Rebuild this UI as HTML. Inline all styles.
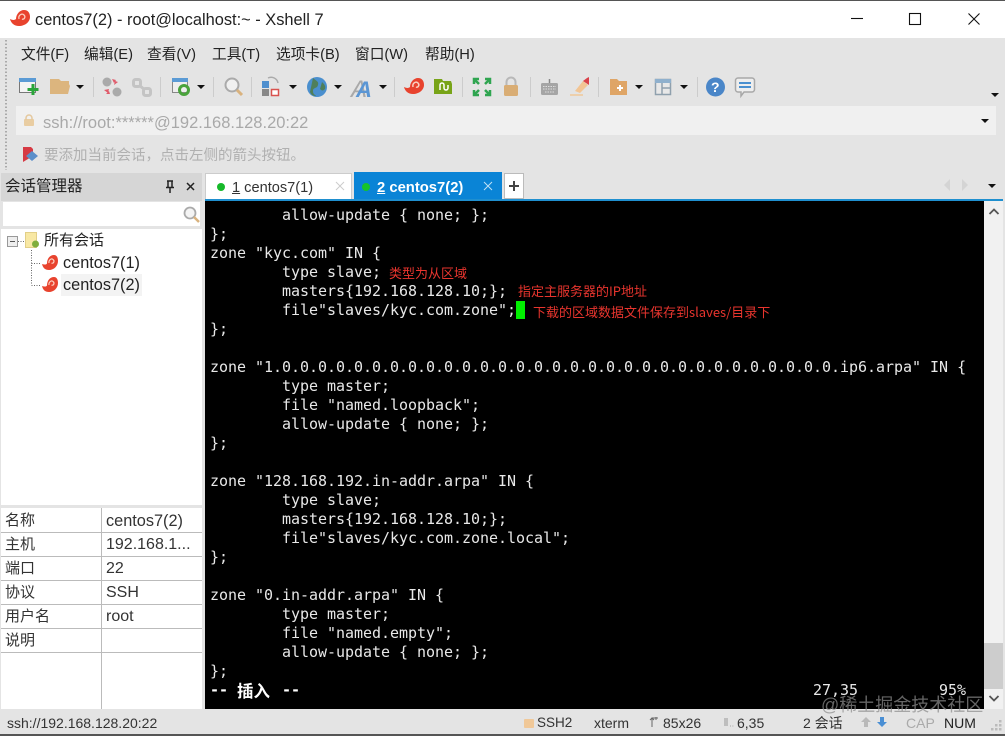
<!DOCTYPE html>
<html><head><meta charset="utf-8"><style>
html,body{margin:0;padding:0}
body{width:1005px;height:736px;overflow:hidden;position:relative;background:#e4e4e4;font-family:"Liberation Sans","Noto Sans CJK SC",sans-serif;color:#222}
.a{position:absolute;white-space:pre}
.t{position:absolute;left:210px;font:15px/19px "DejaVu Sans Mono",monospace;letter-spacing:-.03px;color:#e8e8e8;white-space:pre}
.r{position:absolute;color:#e8352e;font:13px/16px "Noto Sans CJK SC",sans-serif;white-space:pre}
.m{position:absolute;top:46px;font-size:14.700px;line-height:18px;color:#222;white-space:pre}
.k{position:absolute;left:5px;font-size:15px;line-height:20px;color:#333}
.v{position:absolute;left:106px;font-size:16px;line-height:20px;color:#333}
.h{position:absolute;left:1px;width:201px;height:1px;background:#bbb}
.d{position:absolute;width:0;height:0;border-left:4px solid transparent;border-right:4px solid transparent;border-top:4px solid #111}
.s{position:absolute;top:77px;width:1px;height:20px;background:#ccc}
.st{position:absolute;top:715px;font-size:14px;line-height:16px;color:#333;white-space:pre}
svg{position:absolute;overflow:visible}
</style></head><body>
<div class="a" style="left:0;top:0;width:1005px;height:38px;background:#fff;border-top:1px solid #555;box-sizing:border-box"></div>
<svg style="left:10px;top:10px" width="20" height="17" viewBox="0 0 20 17"><path d="M0 9C3 10.500 5 10 6 9C6 4 10 0 14 0C18 0 20 3 20 7C20 12 15 16 9 16C4 16 1 13 0 9z" fill="#e8432e"/><path d="M9 9C8 5 12 3 14 5C16 7 14 10 12 9" fill="none" stroke="#fbd0c0" stroke-width="1.300"/></svg>
<div class="a" style="left:35px;top:11px;font-size:16.400px;line-height:19px;color:#222">centos7(2) - root@localhost:~ - Xshell 7</div>
<svg style="left:0;top:0" width="1005" height="38" fill="none" stroke="#111" stroke-width="1.100"><path d="M851 18.500h12"/><rect x="909.500" y="13.500" width="11" height="11"/><path d="M968.500 13.500l11 11m0-11l-11 11"/></svg>

<svg style="left:4px;top:38px" width="4" height="132"><line x1="2" y1="2" x2="2" y2="132" stroke="#aaa" stroke-width="2" stroke-dasharray="1.500 2"/></svg>
<div class="m" style="left:21px">文件(F)</div>
<div class="m" style="left:84px">编辑(E)</div>
<div class="m" style="left:147px">查看(V)</div>
<div class="m" style="left:212px">工具(T)</div>
<div class="m" style="left:276px">选项卡(B)</div>
<div class="m" style="left:355px">窗口(W)</div>
<div class="m" style="left:425px">帮助(H)</div>

<!-- toolbar -->
<svg style="left:0;top:65px" width="1005" height="40" viewBox="0 65 1005 40">
<g><rect x="19.500" y="78.500" width="16" height="14" fill="#f4f4f4" stroke="#777"/><rect x="19" y="78" width="17" height="4" fill="#5b9bd5"/><path d="M33 84v11M27.500 89.500h11" stroke="#2aa53a" stroke-width="3"/></g>
<path d="M50 79h9l2 2h8l0 3 1 2-2 8H50z" fill="#dcb57e"/>
<g fill="#aaa"><circle cx="107" cy="82" r="4.500"/><circle cx="117" cy="92" r="4.500"/><path d="M104 90l5-1-1 4z M112 79l4 1-2 3z M118 82l-4 3 1-4z M106 94l3-3 1 3z" fill="#e05a6a"/></g>
<g fill="none" stroke="#c4c4c4" stroke-width="3"><rect x="133.500" y="79.500" width="7" height="7" rx="2"/><rect x="143.500" y="88.500" width="7" height="7" rx="2"/><path d="M139 85l6 5"/></g>
<g><rect x="172.500" y="78.500" width="15" height="14" fill="#eee" stroke="#888"/><rect x="172" y="78" width="16" height="4" fill="#5b9bd5"/><circle cx="184" cy="90" r="4.500" fill="none" stroke="#49a33b" stroke-width="3"/></g>
<circle cx="232" cy="85" r="6.500" fill="#f0f0f0" stroke="#aaa" stroke-width="2"/><path d="M237 90l5 5" stroke="#d9b27e" stroke-width="3"/>
<g><rect x="262" y="81" width="7" height="7" fill="#4f8fce"/><rect x="262" y="89" width="7" height="7" fill="#888"/><rect x="271.500" y="89.500" width="7" height="6" fill="#fff" stroke="#d9534f" stroke-width="1.500"/><path d="M268 78a7 7 0 0 1 10 5" fill="none" stroke="#aaa" stroke-width="1.500"/></g>
<circle cx="317" cy="87" r="10" fill="#4a8fce"/><path d="M313 78c3 3 6 3 5 7s-5 2-5 6 3 4 3 5c-4 0-5-2-6-4z M322 82c2 2 4 4 3 7-2 2-3 2-5 0z" fill="#4f7f5a"/>
<text x="351" y="97" font-family="Liberation Sans" font-style="italic" font-size="24" fill="#a9a9a9">A</text><text x="356" y="97" font-family="Liberation Sans" font-style="italic" font-weight="bold" font-size="22" fill="#5b96d4">A</text>
<g transform="translate(404 78)"><path d="M0 9C3 10.500 5 10 6 9C6 4 10 0 14 0C18 0 20 3 20 7C20 12 15 16 9 16C4 16 1 13 0 9z" fill="#e8432e"/><path d="M9 9C8 5 12 3 14 5C16 7 14 10 12 9" fill="none" stroke="#fbd0c0" stroke-width="1.500"/></g>
<path d="M434 79h8l1 2h8l1 3v10h-18z" fill="#78a418"/><path d="M440 90v-5a2 2 0 0 1 4 0v3a2 2 0 0 0 4 0v-3" fill="none" stroke="#fff" stroke-width="1.500"/>
<g stroke="#2fa550" stroke-width="2.500" fill="none"><path d="M474 84v-5h5M490 84v-5h-5M474 90v5h5M490 90v5h-5M475 80l4 4M489 80l-4 4M475 94l4-4M489 94l-4-4"/></g>
<rect x="504" y="85" width="14" height="11" rx="1.500" fill="#d9ad74"/><path d="M506.500 85v-3a4.500 4.500 0 0 1 9 0v3" fill="none" stroke="#b8b8b8" stroke-width="2"/>
<g><rect x="541" y="83" width="17" height="12" rx="1.500" fill="#a5a5a5"/><path d="M549.500 83v-4" stroke="#888" stroke-width="1.500"/><path d="M543 86.500h13M543 89h13M545 92h9" stroke="#ddd" stroke-width="1" stroke-dasharray="1.500 1"/></g>
<path d="M575 91l8-10 5 4-8 8z" fill="#f2c594"/><path d="M583 81l4-3 2-1v8z" fill="#d9424a"/><path d="M570 95h13" stroke="#f0c898" stroke-width="1.500"/>
<path d="M610 79h7l2 2h8v14h-17z" fill="#dfa566"/><path d="M620 85v6M617 88h6" stroke="#fff" stroke-width="2"/>
<g><rect x="655.500" y="79.500" width="15" height="15" fill="#e8e8e8" stroke="#8fa0ad" stroke-width="1.500"/><rect x="655" y="79" width="16" height="4" fill="#8fb0cd"/><path d="M662 83v11M662 88h8" stroke="#8fa0ad" stroke-width="1.500"/></g>
<circle cx="715.500" cy="87" r="9.500" fill="#4a86c8"/><text x="711" y="92" font-family="Liberation Sans" font-weight="bold" font-size="14" fill="#fff">?</text>
<path d="M738 78h14a2.500 2.500 0 0 1 2.500 2.500v9a2.500 2.500 0 0 1-2.500 2.500h-8l-3 4v-4h-3a2.500 2.500 0 0 1-2.500-2.500v-9a2.500 2.500 0 0 1 2.500-2.500z" fill="#eee" stroke="#a8a8a8" stroke-width="1.500"/><path d="M739 83h12M739 87h12" stroke="#4a90d0" stroke-width="2"/>
</svg>
<div class="d" style="left:76px;top:85px"></div>
<div class="d" style="left:197px;top:85px"></div>
<div class="d" style="left:289px;top:85px"></div>
<div class="d" style="left:334px;top:85px"></div>
<div class="d" style="left:379px;top:85px"></div>
<div class="d" style="left:635px;top:85px"></div>
<div class="d" style="left:680px;top:85px"></div>
<div class="d" style="left:991px;top:93px"></div>
<div class="s" style="left:93px"></div><div class="s" style="left:160px"></div><div class="s" style="left:213px"></div><div class="s" style="left:251px"></div><div class="s" style="left:394px"></div><div class="s" style="left:462px"></div><div class="s" style="left:530px"></div><div class="s" style="left:598px"></div><div class="s" style="left:697px"></div>

<!-- address bar -->
<div class="a" style="left:16px;top:106px;width:980px;height:29px;background:#f0f0f0"></div>
<svg style="left:24px;top:115px" width="11" height="11"><rect x="0" y="4" width="10" height="7" rx="1" fill="#e9cda2"/><path d="M2 5V3a3 3 0 0 1 6 0v2" fill="none" stroke="#e4c89e" stroke-width="1.500"/></svg>
<div class="a" style="left:43px;top:114px;font-size:16.500px;line-height:18px;color:#a9a9a9">ssh://root:******@192.168.128.20:22</div>
<div class="d" style="left:981px;top:119px"></div>
<svg style="left:22px;top:146px" width="18" height="18"><path d="M1 1h8l2 2v7l-5 3-5 3z" fill="#d63a44"/><path d="M4 10l6-5 6 5-6 5z" fill="#5b8fca"/></svg>
<div class="a" style="left:44px;top:147px;font-size:14.500px;line-height:18px;color:#b0b0b0">要添加当前会话，点击左侧的箭头按钮。</div>

<!-- left panel -->
<div class="a" style="left:1px;top:173px;width:201px;height:28px;background:#d6d6d6"></div>
<div class="a" style="left:5px;top:177px;font-size:15.500px;line-height:20px;color:#222">会话管理器</div>
<svg style="left:164px;top:180px" width="36" height="14"><path d="M3 1h6M4 1v6M8 1v6M2 7.500h8M6 8v5" stroke="#222" stroke-width="1.500" fill="none"/><path d="M23 3l7 7m0-7l-7 7" stroke="#222" stroke-width="1.500"/></svg>
<div class="a" style="left:3px;top:202px;width:197px;height:24px;background:#fff"></div>
<svg style="left:183px;top:206px" width="17" height="17"><circle cx="7" cy="7" r="5.500" fill="#f4f4f4" stroke="#aaa" stroke-width="1.800"/><path d="M11 11l5 5" stroke="#d9b27e" stroke-width="2.500"/></svg>
<div class="a" style="left:1px;top:229px;width:201px;height:276px;background:#fff"></div>
<svg style="left:0;top:226px" width="70" height="72" viewBox="0 226 70 72">
<rect x="7.500" y="236.500" width="10" height="10" fill="#eee" stroke="#999"/><path d="M10 241.500h5" stroke="#555"/>
<path d="M18 241.500h6M31.500 250v35M31.500 263.500h10M31.500 285.500h10" stroke="#666" stroke-dasharray="1 1.500" fill="none"/>
<path d="M25.500 232.500h11v15h-11z" fill="#f8e8a4" stroke="#e2cf88"/><circle cx="35.500" cy="244" r="3.500" fill="#7fae3c"/>
<g transform="translate(42 255)"><path d="M0 9C3 10 4.500 9.500 5 8.500C5 3.500 8 0 12 0C15 0 16 3 16 6C16 11 12 15 7 15C3 15 1 13 0 9z" fill="#e8432e"/><path d="M7 8C6.500 5 9.500 3 11 4.500C13 6 11.500 9 9.500 8" fill="none" stroke="#fbd0c0" stroke-width="1.200"/></g>
<g transform="translate(42 277)"><path d="M0 9C3 10 4.500 9.500 5 8.500C5 3.500 8 0 12 0C15 0 16 3 16 6C16 11 12 15 7 15C3 15 1 13 0 9z" fill="#e8432e"/><path d="M7 8C6.500 5 9.500 3 11 4.500C13 6 11.500 9 9.500 8" fill="none" stroke="#fbd0c0" stroke-width="1.200"/></g>
</svg>
<div class="a" style="left:44px;top:231px;font-size:15px;line-height:20px;color:#222">所有会话</div>
<div class="a" style="left:63px;top:253px;font-size:16.300px;line-height:20px;color:#222">centos7(1)</div>
<div class="a" style="left:61px;top:274px;width:81px;height:22px;background:#f3f3f3"></div>
<div class="a" style="left:63px;top:275px;font-size:16.300px;line-height:20px;color:#222">centos7(2)</div>

<div class="a" style="left:1px;top:508px;width:201px;height:201px;background:#fff"></div>
<div class="a" style="left:101px;top:508px;width:1px;height:201px;background:#bbb"></div>
<div class="h" style="top:532px"></div><div class="h" style="top:556px"></div><div class="h" style="top:580px"></div><div class="h" style="top:604px"></div><div class="h" style="top:628px"></div><div class="h" style="top:652px"></div>
<div class="k" style="top:511px">名称</div><div class="v" style="top:511px;font-size:16.300px">centos7(2)</div>
<div class="k" style="top:535px">主机</div><div class="v" style="top:535px">192.168.1...</div>
<div class="k" style="top:559px">端口</div><div class="v" style="top:559px">22</div>
<div class="k" style="top:583px">协议</div><div class="v" style="top:583px">SSH</div>
<div class="k" style="top:607px">用户名</div><div class="v" style="top:607px">root</div>
<div class="k" style="top:631px">说明</div>

<!-- tabs -->
<div class="a" style="left:205px;top:173px;width:147px;height:27px;background:#fff;border:1px solid #ccc;border-bottom:0;box-sizing:border-box"></div>
<div class="a" style="left:217px;top:183px;width:8px;height:8px;border-radius:50%;background:#16b92a"></div>
<div class="a" style="left:232px;top:179px;font-size:14.600px;line-height:18px;color:#333"><u>1</u> centos7(1)</div>
<svg style="left:335px;top:181px" width="10" height="10"><path d="M1 1l8 8m0-8l-8 8" stroke="#ccc"/></svg>
<div class="a" style="left:354px;top:172px;width:148px;height:28px;background:#0a84d6"></div>
<div class="a" style="left:362px;top:183px;width:8px;height:8px;border-radius:50%;background:#16c32a"></div>
<div class="a" style="left:377px;top:179px;font-size:14.800px;line-height:18px;font-weight:bold;color:#fff"><u>2</u> centos7(2)</div>
<svg style="left:484px;top:181px" width="10" height="10"><path d="M0 1l8 8m0-8l-8 8" stroke="#bfe0f5"/></svg>
<div class="a" style="left:504px;top:173px;width:20px;height:26px;background:#fff;border:1px solid #bbb;box-sizing:border-box"></div>
<svg style="left:508px;top:180px" width="12" height="12"><path d="M1 6h10M6 1v10" stroke="#444" stroke-width="2"/></svg>
<svg style="left:942px;top:178px" width="30" height="16"><path d="M8 1L2 7l6 6z" fill="#d4d4d4"/><path d="M20 1l6 6-6 6z" fill="#d4d4d4"/></svg>
<div class="d" style="left:988px;top:184px"></div>

<!-- terminal -->
<div class="a" style="left:205px;top:199px;width:798px;height:2px;background:#1f8fcf"></div>
<div class="a" style="left:205px;top:201px;width:779px;height:508px;background:#000"></div>
<div class="a" style="left:984px;top:201px;width:19px;height:508px;background:#f1f1f1"></div>
<div class="a" style="left:984px;top:643px;width:19px;height:46px;background:#cdcdcd"></div>
<svg style="left:988px;top:207px" width="12" height="10"><path d="M1.500 7l4.500-4.500 4.500 4.500" fill="none" stroke="#555" stroke-width="1.800"/></svg>
<svg style="left:988px;top:694px" width="12" height="10"><path d="M1.500 2l4.500 4.500 4.500-4.500" fill="none" stroke="#555" stroke-width="1.800"/></svg>

<div class="t" style="top:206px">        allow-update { none; };
};
zone "kyc.com" IN {
        type slave;
        masters{192.168.128.10;};
        file"slaves/kyc.com.zone";
};

zone "1.0.0.0.0.0.0.0.0.0.0.0.0.0.0.0.0.0.0.0.0.0.0.0.0.0.0.0.0.0.0.0.ip6.arpa" IN {
        type master;
        file "named.loopback";
        allow-update { none; };
};

zone "128.168.192.in-addr.arpa" IN {
        type slave;
        masters{192.168.128.10;};
        file"slaves/kyc.com.zone.local";
};

zone "0.in-addr.arpa" IN {
        type master;
        file "named.empty";
        allow-update { none; };
};</div>
<div class="a" style="left:516px;top:301px;width:9px;height:18px;background:#00f000"></div>
<div class="r" style="left:389px;top:265px">类型为从区域</div>
<div class="r" style="left:518px;top:283px">指定主服务器的IP地址</div>
<div class="r" style="left:533px;top:304px">下载的区域数据文件保存到slaves/目录下</div>
<div class="t" style="top:681px;color:#fff;font-weight:bold">-- <span style="font-family:'Noto Sans CJK SC',sans-serif;font-size:16.500px;display:inline-block;width:36px;line-height:19px;vertical-align:top">插入</span> --</div>
<div class="t" style="top:681px;left:813px">27,35</div>
<div class="t" style="top:681px;left:939px">95%</div>

<!-- status bar -->
<div class="a" style="left:0;top:709px;width:1005px;height:25px;background:#e4e4e4"></div>
<div class="a" style="left:0;top:734px;width:1005px;height:2px;background:#555"></div>
<div class="st" style="left:7px">ssh://192.168.128.20:22</div>
<svg style="left:524px;top:716px" width="10" height="12"><rect y="3" width="10" height="9" rx="1" fill="#f0c898"/></svg>
<div class="st" style="left:537px;font-size:13.500px">SSH2</div>
<div class="st" style="left:594px">xterm</div>
<svg style="left:649px;top:717px" width="10" height="11"><path d="M3 10V1h6M1 3l2-2 2 2M7 0v3" fill="none" stroke="#666"/></svg>
<div class="st" style="left:663px">85x26</div>
<svg style="left:724px;top:718px" width="10" height="9"><path d="M1 0v8M3 0v8M6 8h.8M8.500 8h.8" stroke="#999"/></svg>
<div class="st" style="left:737px">6,35</div>
<div class="st" style="left:803px">2 会话</div>
<svg style="left:860px;top:716px" width="30" height="12"><path d="M6 1l5 5H8v5H4V6H1z" fill="#b9b9b9"/><path d="M22 11l5-5h-3V1h-4v5h-3z" fill="#4a8fd4"/></svg>
<div class="st" style="left:906px;color:#aaa">CAP</div>
<div class="st" style="left:944px;color:#222">NUM</div>
<svg style="left:990px;top:720px" width="12" height="12"><g fill="#bbb"><rect x="9" y="0" width="2.500" height="2.500"/><rect x="5" y="4" width="2.500" height="2.500"/><rect x="9" y="4" width="2.500" height="2.500"/><rect x="1" y="8" width="2.500" height="2.500"/><rect x="5" y="8" width="2.500" height="2.500"/><rect x="9" y="8" width="2.500" height="2.500"/></g></svg>
<div class="a" style="left:821px;top:692px;font-size:18px;line-height:26px;color:rgba(140,140,140,.72)">@稀土掘金技术社区</div>
</body></html>
